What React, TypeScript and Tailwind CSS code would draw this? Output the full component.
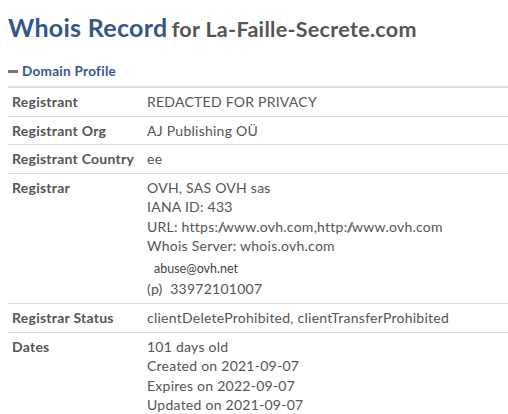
const rows: { label: string; lines: React.ReactNode[] }[] = [
  { label: "Registrant", lines: ["REDACTED FOR PRIVACY"] },
  { label: "Registrant Org", lines: ["AJ Publishing OÜ"] },
  { label: "Registrant Country", lines: ["ee"] },
  {
    label: "Registrar",
    lines: [
      "OVH, SAS OVH sas",
      "IANA ID: 433",
      <>
        URL: https:<span className="tracking-[-4px]">//</span>
        <span className="pl-[3px]">www.ovh.com,http:</span>
        <span className="tracking-[-4px]">//</span>
        <span className="pl-[3px]">www.ovh.com</span>
      </>,
      "Whois Server: whois.ovh.com",
    ],
  },
  { label: "Registrar Status", lines: ["clientDeleteProhibited, clientTransferProhibited"] },
  {
    label: "Dates",
    lines: [
      "101 days old",
      "Created on 2021-09-07",
      "Expires on 2022-09-07",
      "Updated on 2021-09-07",
    ],
  },
];

export default function App() {
  return (
    <div className="min-h-[414px] overflow-hidden bg-white pl-2 text-[#555] font-['Lato',sans-serif]">
      <h1 className="pt-[12px] leading-[30px] whitespace-nowrap">
        <span className="text-[25px] font-bold tracking-[0.3px] text-[#34578a]">Whois Record</span>{" "}
        <span className="text-[21.5px] font-bold tracking-[0.3px] text-[#555]">for La-Faille-Secrete.com</span>
      </h1>
      <div className="mt-[15px] flex items-center gap-[4px] text-[13.5px] font-bold tracking-[0.3px] text-[#34578a]">
        <span className="block h-[3px] w-[10px] bg-[#777]" />
        <span className="leading-[20px]">Domain Profile</span>
      </div>
      <div className="mt-[5px] border-t-2 border-[#ddd] text-[14px] tracking-[0.25px]">
        {rows.map((r) => (
          <div key={r.label} className="flex border-b border-[#ddd] py-[4px] leading-[19.5px]">
            <div className="w-[139px] shrink-0 pl-[4px] font-bold">{r.label}</div>
            <div className="flex flex-col">
              {r.lines.map((l, i) => (
                <span key={i}>{l}</span>
              ))}
              {r.label === "Registrar" && (
                <>
                  <span className="pl-[7px] pt-[3px] text-[12.5px] tracking-normal leading-[20px] text-[#444]">abuse@ovh.net</span>
                  <span className="pb-[1px] leading-[19.5px]">(p)&nbsp; 33972101007</span>
                </>
              )}
            </div>
          </div>
        ))}
      </div>
    </div>
  );
}
